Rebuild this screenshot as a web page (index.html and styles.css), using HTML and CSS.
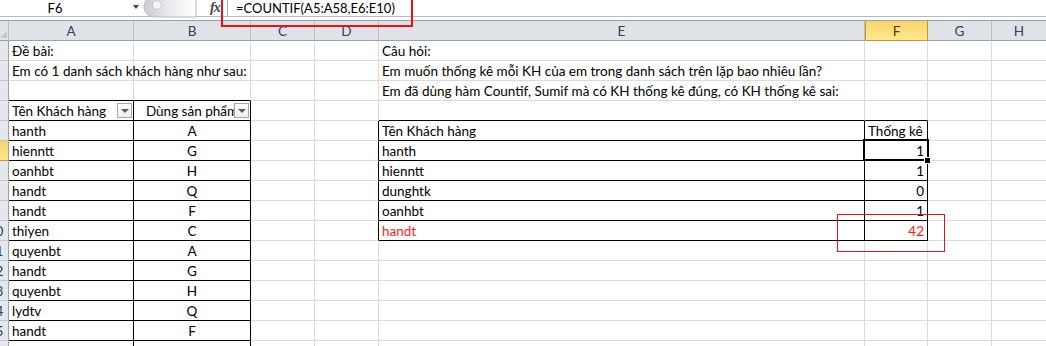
FILE: index.html
```html
<!DOCTYPE html>
<html lang="vi">
<head>
  <meta charset="UTF-8" />
  <title>Countif - thống kê khách hàng</title>
  <link rel="stylesheet" href="styles.css">
</head>
<body>
<div class="page">

  <!-- Formula bar -->
  <div class="formula-bar">
    <div class="name-box">F6</div>
    <div class="name-arrow"></div>
    <svg class="splitter" width="52" height="17" viewBox="0 0 52 17">
      <defs>
        <linearGradient id="spl" x1="0" x2="1" y1="0" y2="0">
          <stop offset="0" stop-color="#c9ccd1"/>
          <stop offset="0.45" stop-color="#e6e8eb"/>
          <stop offset="1" stop-color="#ffffff"/>
        </linearGradient>
      </defs>
      <path d="M52 -4 H12 C4 -4 0 2 0 7 C0 12 4 17 12 17 H52 Z" fill="url(#spl)" stroke="#b5b9bf" stroke-width="1"/>
      <circle cx="13" cy="5" r="4.5" fill="#f4f5f6" stroke="#c3c6cb"/>
    </svg>
    <div class="fx">fx</div>
    <div class="formula">=COUNTIF(A5:A58,E6:E10)</div>
  </div>
  <div class="bar-gap"></div>

  <!-- Worksheet -->
  <table class="sheet">
    <colgroup>
      <col class="c-rh"><col class="c-a"><col class="c-b"><col class="c-c"><col class="c-d">
      <col class="c-e"><col class="c-f"><col class="c-g"><col class="c-h">
    </colgroup>
    <tr class="cols">
      <th class="corner"></th>
      <th>A</th><th>B</th><th>C</th><th>D</th><th>E</th><th class="cur">F</th><th>G</th><th>H</th>
    </tr>
    <tr>
      <td class="rh"><span>1</span></td>
      <td class="spill">Đề bài:</td><td></td><td></td><td></td>
      <td>Câu hỏi:</td><td></td><td></td><td></td>
    </tr>
    <tr>
      <td class="rh"><span>2</span></td>
      <td class="spill">Em có 1 danh sách khách hàng như sau:</td><td></td><td></td><td></td>
      <td>Em muốn thống kê mỗi KH của em trong danh sách trên lặp bao nhiêu lần?</td><td></td><td></td><td></td>
    </tr>
    <tr>
      <td class="rh"><span>3</span></td>
      <td class="kb"></td><td class="kb"></td><td></td><td></td>
      <td>Em đã dùng hàm Countif, Sumif mà có KH thống kê đúng, có KH thống kê sai:</td><td></td><td></td><td></td>
    </tr>
    <tr>
      <td class="rh"><span>4</span></td>
      <td class="kb kr head">Tên Khách hàng<span class="filter"></span></td>
      <td class="kb kr head center">Dùng sản phẩm<span class="filter"></span></td>
      <td></td><td></td>
      <td class="kb"></td><td class="kb"></td><td></td><td></td>
    </tr>
    <tr>
      <td class="rh"><span>5</span></td>
      <td class="kb kr">hanth</td><td class="kb kr center">A</td><td></td><td class="kr"></td>
      <td class="kb kr">Tên Khách hàng</td><td class="kb kr">Thống kê</td><td></td><td></td>
    </tr>
    <tr>
      <td class="rh cur"><span>6</span></td>
      <td class="kb kr">hienntt</td><td class="kb kr center">G</td><td></td><td class="kr"></td>
      <td class="kb kr">hanth</td><td class="kb kr num sel">1<span class="handle"></span></td><td></td><td></td>
    </tr>
    <tr>
      <td class="rh"><span>7</span></td>
      <td class="kb kr">oanhbt</td><td class="kb kr center">H</td><td></td><td class="kr"></td>
      <td class="kb kr">hienntt</td><td class="kb kr num">1</td><td></td><td></td>
    </tr>
    <tr>
      <td class="rh"><span>8</span></td>
      <td class="kb kr">handt</td><td class="kb kr center">Q</td><td></td><td class="kr"></td>
      <td class="kb kr">dunghtk</td><td class="kb kr num">0</td><td></td><td></td>
    </tr>
    <tr>
      <td class="rh"><span>9</span></td>
      <td class="kb kr">handt</td><td class="kb kr center">F</td><td></td><td class="kr"></td>
      <td class="kb kr">oanhbt</td><td class="kb kr num">1</td><td></td><td></td>
    </tr>
    <tr>
      <td class="rh"><span>10</span></td>
      <td class="kb kr">thiyen</td><td class="kb kr center">C</td><td></td><td class="kr"></td>
      <td class="kb kr red">handt</td><td class="kb kr num red">42</td><td></td><td></td>
    </tr>
    <tr>
      <td class="rh"><span>11</span></td>
      <td class="kb kr">quyenbt</td><td class="kb kr center">A</td><td></td><td></td>
      <td></td><td></td><td></td><td></td>
    </tr>
    <tr>
      <td class="rh"><span>12</span></td>
      <td class="kb kr">handt</td><td class="kb kr center">G</td><td></td><td></td>
      <td></td><td></td><td></td><td></td>
    </tr>
    <tr>
      <td class="rh"><span>13</span></td>
      <td class="kb kr">quyenbt</td><td class="kb kr center">H</td><td></td><td></td>
      <td></td><td></td><td></td><td></td>
    </tr>
    <tr>
      <td class="rh"><span>14</span></td>
      <td class="kb kr">lydtv</td><td class="kb kr center">Q</td><td></td><td></td>
      <td></td><td></td><td></td><td></td>
    </tr>
    <tr>
      <td class="rh"><span>15</span></td>
      <td class="kb kr">handt</td><td class="kb kr center">F</td><td></td><td></td>
      <td></td><td></td><td></td><td></td>
    </tr>
    <tr>
      <td class="rh"><span>16</span></td>
      <td class="kb kr">quyenbt</td><td class="kb kr center">A</td><td></td><td></td>
      <td></td><td></td><td></td><td></td>
    </tr>
  </table>

  <!-- red annotation boxes -->
  <div class="mark mark-formula"></div>
  <div class="mark mark-result"></div>
</div>
</body>
</html>
```

FILE: styles.css
```css
body {
  margin: 0;
  font-family: Lato, "Noto Sans", sans-serif;
  font-size: 13.5px;
  color: #000;
  background: #fff;
  overflow: hidden;
}
.page {
  position: relative;
  width: 1046px;
  height: 346px;
  overflow: hidden;
}

/* formula bar */
.formula-bar {
  display: flex;
  height: 16px;
  border-bottom: 1px solid #b4b9c0;
  font-size: 13px;
}
.name-box {
  width: 110px;
  text-align: center;
  line-height: 16px;
}
.name-arrow {
  width: 0;
  height: 0;
  margin: 5px 0 0 23px;
  border-left: 3.5px solid transparent;
  border-right: 3.5px solid transparent;
  border-top: 4px solid #444;
}
.splitter {
  margin-left: 5px;
  overflow: visible;
}
.fx {
  width: 17px;
  margin-left: 14px;
  font-family: "Liberation Serif", serif;
  font-style: italic;
  font-weight: bold;
  font-size: 14px;
  line-height: 16px;
  color: #444;
  letter-spacing: -1px;
}
.formula {
  flex: 1;
  border-left: 1px solid #aab0b8;
  padding-left: 8px;
  line-height: 16px;
}
.bar-gap {
  height: 3px;
}

/* sheet grid */
.sheet {
  border-collapse: separate;
  border-spacing: 0;
  table-layout: fixed;
  width: 1047px;
}
.c-rh { width: 9px; }
.c-a { width: 125px; }
.c-b { width: 117px; }
.c-c { width: 64px; }
.c-d { width: 64px; }
.c-e { width: 486px; }
.c-f { width: 63px; }
.c-g { width: 64px; }
.c-h { width: 55px; }

.sheet tr {
  height: 20px;
}
.sheet td {
  padding: 0 3px;
  border-right: 1px solid #d9dbdd;
  border-bottom: 1px solid #d9dbdd;
  line-height: 18px;
  vertical-align: bottom;
  white-space: nowrap;
  overflow: hidden;
}
.sheet td.spill {
  overflow: visible;
}
.sheet tr.cols {
  height: 21px;
}
.cols th {
  padding: 0;
  font-weight: normal;
  color: #2d4160;
  background: #dfe3e8;
  border-top: 1px solid #9aa0a7;
  border-right: 1px solid #b9bec5;
  border-bottom: 1px solid #9aa0a7;
  line-height: 18px;
  vertical-align: bottom;
}
.cols th.cur {
  background: linear-gradient(#f9d46d, #fde88f);
  border-left: 1px solid #c89636;
  border-right: 1px solid #c89636;
  border-bottom-color: #c89636;
  color: #4a3a10;
}
.cols th.corner {
  position: relative;
  background: #dfe3e8;
}
.corner::after {
  content: "";
  position: absolute;
  right: 1px;
  bottom: 2px;
  border-left: 7px solid transparent;
  border-bottom: 7px solid #c3c8ce;
}

.sheet td.rh {
  padding: 0;
  background: #e4e7eb;
  border-right: 1px solid #9aa0a7;
  border-bottom: 1px solid #c2c6cc;
  color: #2d4160;
}
.rh span {
  display: block;
  width: 25px;
  margin-left: -17px;
  text-align: center;
}
.sheet td.rh.cur {
  background: linear-gradient(#f9d46d, #fde88f);
  border-bottom-color: #c89636;
}

/* black table borders */
.sheet td.kb { border-bottom-color: #000; }
.sheet td.kr { border-right-color: #000; }

.center { text-align: center; }
.num { text-align: right; }
.sheet td.num { padding-right: 3px; }
.red { color: #ff1a1a; }

.head {
  position: relative;
}
.filter {
  position: absolute;
  right: 1px;
  bottom: 2px;
  width: 13px;
  height: 13px;
  border: 1px solid #a3a7ad;
  background: linear-gradient(#ffffff, #eceef0);
}
.filter::after {
  content: "";
  position: absolute;
  left: 3px;
  top: 5px;
  border-left: 4px solid transparent;
  border-right: 4px solid transparent;
  border-top: 4px solid #5c6066;
}

/* active cell */
.sel {
  position: relative;
  overflow: visible !important;
}
.sel::before {
  content: "";
  position: absolute;
  left: -2px;
  top: -2px;
  right: -2px;
  bottom: -1px;
  border: 2px solid #000;
  box-shadow: inset 0 0 0 1px #fff;
}
.handle {
  position: absolute;
  right: -4px;
  bottom: -4px;
  width: 5px;
  height: 5px;
  background: #000;
  border: 1px solid #fff;
}

/* annotations */
.mark {
  position: absolute;
  border-style: solid;
  border-color: #e8121c;
}
.mark-formula {
  left: 221px;
  top: -4px;
  width: 188px;
  height: 27px;
  border-width: 2px;
}
.mark-result {
  left: 837px;
  top: 214px;
  width: 106px;
  height: 36px;
  border-width: 1px;
}
```
